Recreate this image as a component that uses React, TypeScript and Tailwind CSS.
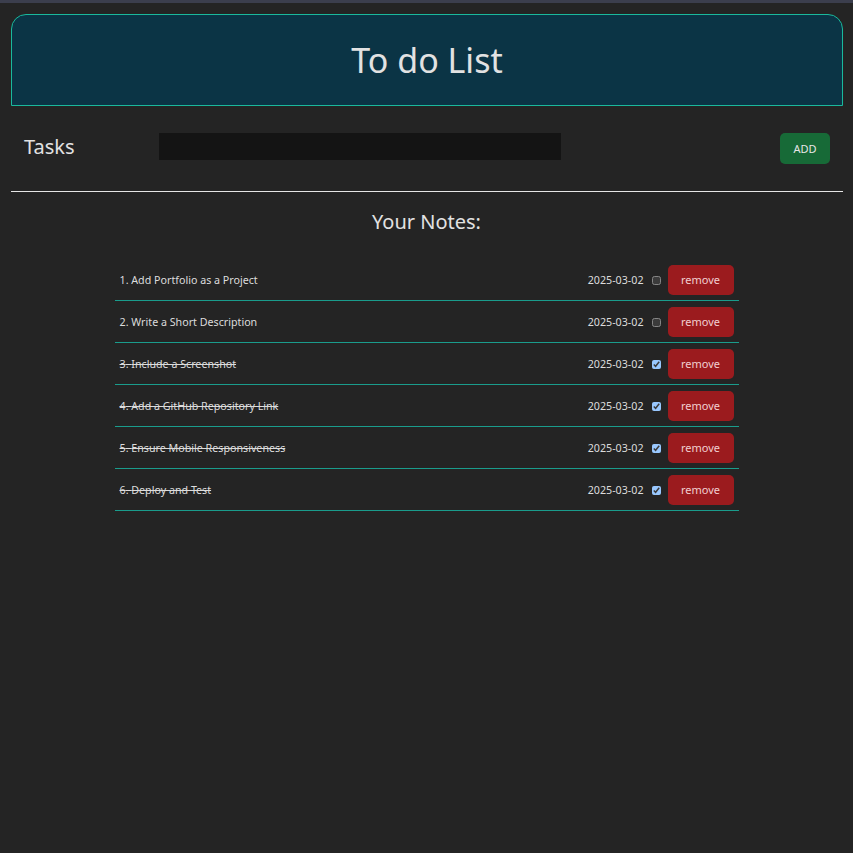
import { useState } from 'react';

type Note = { id: number; text: string; date: string; done: boolean };

const initialNotes: Note[] = [
    { id: 1, text: 'Add Portfolio as a Project', date: '2025-03-02', done: false },
    { id: 2, text: 'Write a Short Description', date: '2025-03-02', done: false },
    { id: 3, text: 'Include a Screenshot', date: '2025-03-02', done: true },
    { id: 4, text: 'Add a GitHub Repository Link', date: '2025-03-02', done: true },
    { id: 5, text: 'Ensure Mobile Responsiveness', date: '2025-03-02', done: true },
    { id: 6, text: 'Deploy and Test', date: '2025-03-02', done: true },
];

export default function App() {
    const [notes, setNotes] = useState<Note[]>(initialNotes);
    const [task, setTask] = useState('');

    const toggle = (id: number) =>
        setNotes(notes.map((n) => (n.id === id ? { ...n, done: !n.done } : n)));
    const remove = (id: number) => setNotes(notes.filter((n) => n.id !== id));
    const add = () => {
        if (!task.trim()) return;
        setNotes([...notes, { id: Date.now(), text: task, date: '2025-03-02', done: false }]);
        setTask('');
    };

    return (
        <main className="min-h-screen bg-[#242424] text-[#dcdcdc] font-['Noto_Sans',sans-serif]">
            <div className="h-[3px] bg-[#3b3e4d]" />
            <div className="pl-[11px] pr-[10px] pt-[11px]">
                <header className="h-[92px] flex items-center justify-center bg-[#0b3445] border border-[#1ab99c] rounded-t-[15px]">
                    <h1 className="text-[34px] font-normal text-[#e2e2e2] leading-none">To do List</h1>
                </header>
            </div>

            <div className="flex items-center pl-[24px] pr-[23px] mt-[27px]">
                <span className="w-[135px] text-[20px] text-[#e2e2e2] leading-none -mt-[3px]">Tasks</span>
                <input
                    value={task}
                    onChange={(e) => setTask(e.target.value)}
                    className="w-[402px] h-[27px] bg-[#141414] outline-none px-2 text-[12px] text-[#dcdcdc] -mt-[4px]"
                />
                <div className="flex-1" />
                <button
                    onClick={add}
                    className="w-[50px] h-[31px] bg-[#176a37] rounded-[5px] text-[11px] text-[#e6e6e6] pt-[1px]"
                >
                    ADD
                </button>
            </div>

            <div className="ml-[11px] mr-[10px] mt-[27px] border-t border-[#e6e6e6]" />

            <h2 className="text-center text-[20px] text-[#e2e2e2] mt-[16px] leading-[28px]">Your Notes:</h2>

            <ul className="w-[624px] mx-auto mt-[23px] text-[10.7px]">
                {notes.map((n, i) => (
                    <li
                        key={n.id}
                        className="flex items-center pl-[5px] pr-[5px] pt-[6px] pb-[5px] border-b border-[#1a9c8c]"
                    >
                        <span className={n.done ? 'flex-1 line-through text-[#dcdcdc] pt-[1px]' : 'flex-1 text-[#dcdcdc] pt-[1px]'}>
                            {i + 1}. {n.text}
                        </span>
                        <span className="text-[#dcdcdc] pt-[1px]">{n.date}</span>
                        <input
                            type="checkbox"
                            checked={n.done}
                            onChange={() => toggle(n.id)}
                            className="w-[9px] h-[9px] ml-[8px] mr-[7px] [color-scheme:dark]"
                        />
                        <button
                            onClick={() => remove(n.id)}
                            className="w-[66px] h-[30px] bg-[#9b1b1e] rounded-[5px] text-[11px] text-[#f1cfd0]"
                        >
                            remove
                        </button>
                    </li>
                ))}
            </ul>
        </main>
    );
}
